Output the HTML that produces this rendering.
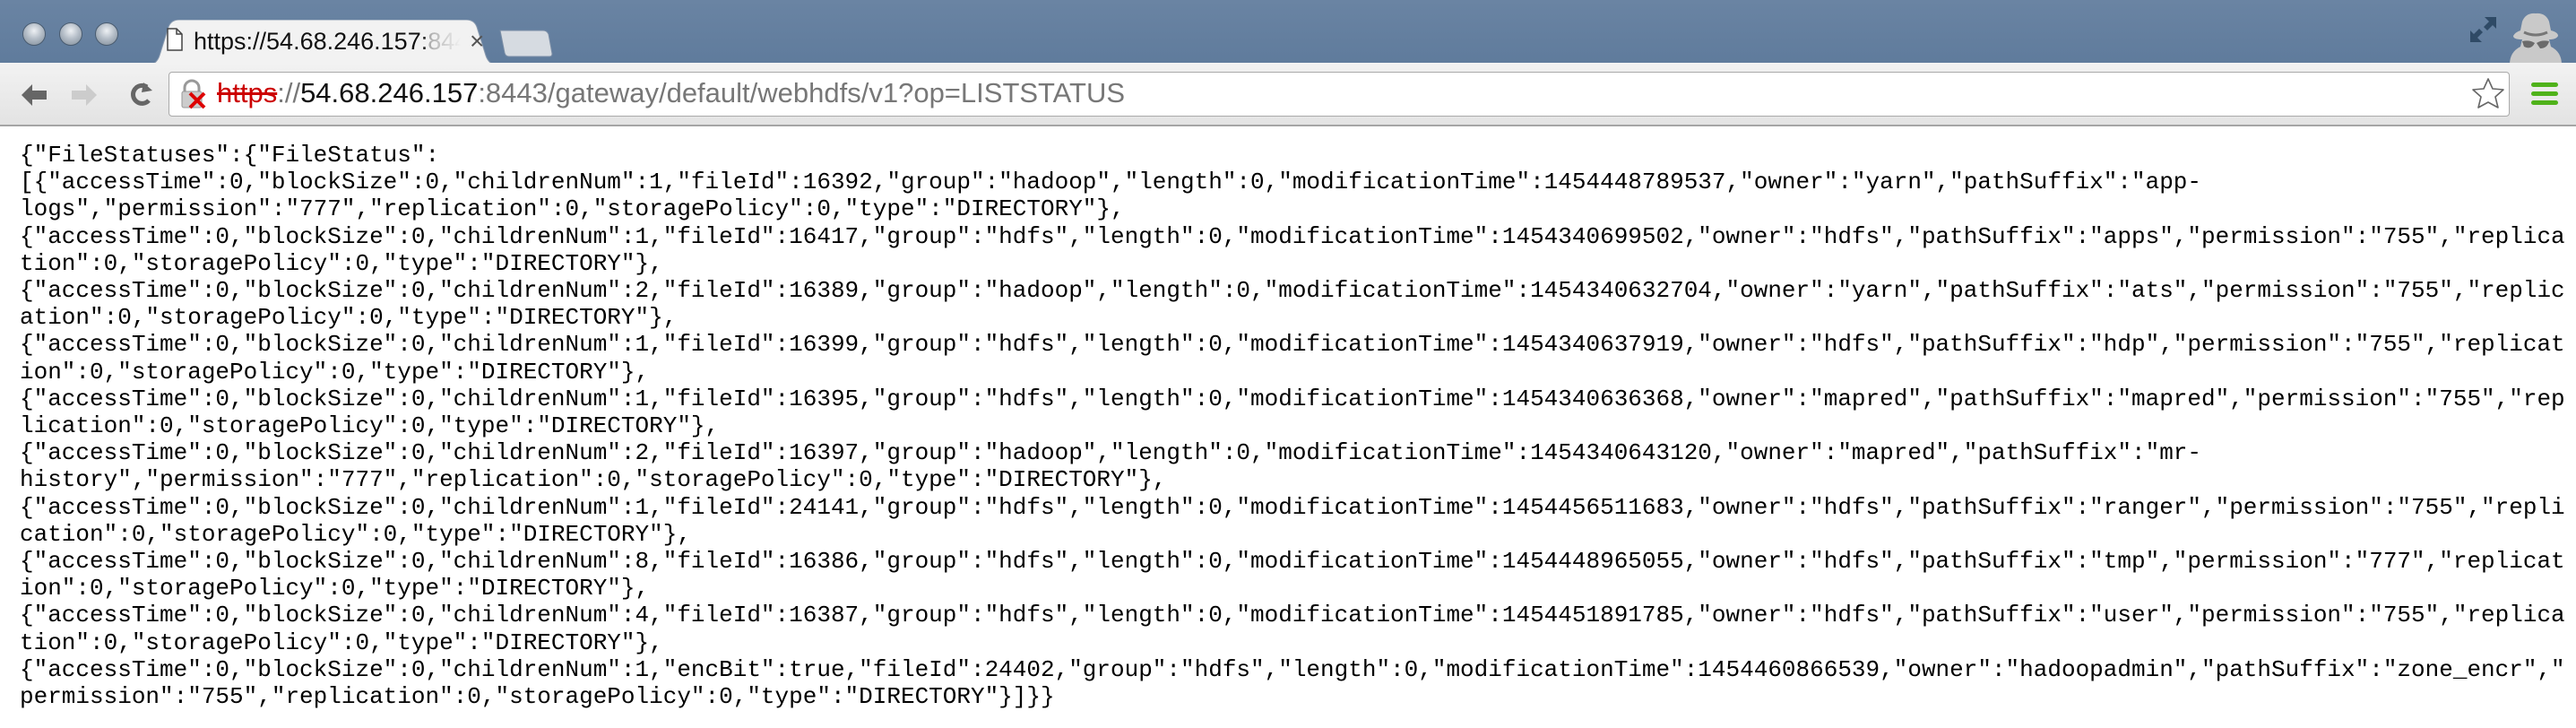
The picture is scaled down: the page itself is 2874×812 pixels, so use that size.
<!DOCTYPE html>
<html><head><meta charset="utf-8">
<style>
html,body{margin:0;padding:0;}
body{width:2874px;height:812px;overflow:hidden;background:#fff;position:relative;font-family:"Liberation Sans",sans-serif;}
.top{position:absolute;left:0;top:0;width:2874px;height:72px;background:linear-gradient(#6a84a3,#5f7b9c);}
.light{position:absolute;top:25px;width:24px;height:24px;border-radius:50%;background:radial-gradient(circle at 50% 35%,#eef1f4 0,#b5bec8 45%,#7d8a97 100%);border:1px solid #4a5c70;}
.tab{position:absolute;left:160px;top:22px;width:400px;height:52px;}
.newtab{position:absolute;left:556px;top:32px;width:62px;height:32px;}
.tabtxt{position:absolute;left:216px;top:31px;width:298px;overflow:hidden;font-size:27px;color:#111;white-space:nowrap;-webkit-mask-image:linear-gradient(90deg,#000 85%,transparent);}
.tabx{position:absolute;left:524px;top:30px;font-size:28px;color:#555;}
.toolbar{position:absolute;left:0;top:70px;width:2874px;height:69px;background:linear-gradient(#f2f2f2,#e3e3e3);border-bottom:2px solid #a5a5a5;}
.omni{position:absolute;left:188px;top:80px;width:2612px;height:50px;background:#fff;border:1px solid #aaa;border-radius:4px;box-sizing:border-box;}
.url{position:absolute;left:242px;top:86px;font-size:31px;white-space:nowrap;color:#777;}
.url .h{color:#c00;text-decoration:line-through;}
.url .d{color:#111;}
.content{position:absolute;left:22px;top:158px;font-family:"Liberation Mono",monospace;font-size:26px;line-height:30.2px;color:#000;white-space:pre;}
</style></head><body>
<div class="top"></div>
<div class="light" style="left:25px"></div>
<div class="light" style="left:66px"></div>
<div class="light" style="left:106px"></div>
<svg class="tab" viewBox="0 0 400 52"><path d="M0 52 Q14 52 18 40 L28 8 Q31 0 40 0 L360 0 Q369 0 372 8 L382 40 Q386 52 400 52 Z" fill="#f2f2f2" stroke="#8a9bb0" stroke-width="1"/></svg>
<svg class="newtab" viewBox="0 0 62 32"><path d="M2 2 L50 2 Q54 2 56 6 L60 28 Q60 31 57 31 L12 31 Q8 31 7 27 Z" fill="#d6dbe1" stroke="#7b8ea6" stroke-width="1"/></svg>
<svg style="position:absolute;left:186px;top:31px" width="18" height="26" viewBox="0 0 18 26"><path d="M1 1 H11 L17 7 V25 H1 Z M11 1 V7 H17" fill="#fff" stroke="#444" stroke-width="1.5"/></svg>
<div class="tabtxt">https://54.68.246.157:<span style="color:#999">8443</span></div>
<div class="tabx">×</div>
<svg style="position:absolute;left:2755px;top:18px" width="32" height="30" viewBox="0 0 32 30"><path d="M17 1 H30 V14 L26 10 L20 16 L16 12 L22 6 Z M14 29 H1 V16 L5 20 L11 14 L15 18 L9 24 Z" fill="#2f4a66"/></svg>
<svg style="position:absolute;left:2793px;top:12px" width="72" height="60" viewBox="0 0 70 60"><path d="M20 12 Q24 2 35 3 Q46 2 50 12 L52 22 Q60 24 60 28 Q58 32 50 32 L52 40 Q64 46 64 60 H6 Q6 46 18 40 L20 32 Q10 32 10 28 Q12 24 18 22 Z" fill="#c9c9c9"/><path d="M20 34 Q28 32 34 36 Q30 44 22 40 Z M36 36 Q42 32 50 34 Q48 42 40 42 Z" fill="#6b6b6b"/><path d="M22 24 Q35 30 48 24" fill="none" stroke="#777" stroke-width="3"/></svg>
<div class="toolbar"></div>
<svg style="position:absolute;left:20px;top:88px" width="160" height="36" viewBox="0 0 160 36"><path d="M4 18 L16 6 L16 13 L32 13 L32 23 L16 23 L16 30 Z" fill="#666"/><path d="M88 18 L76 6 L76 13 L60 13 L60 23 L76 23 L76 30 Z" fill="#ccc"/><path d="M144 9 A10 10 0 1 0 146 24" fill="none" stroke="#666" stroke-width="5"/><path d="M140 4 L150 13 L138 15 Z" fill="#666"/></svg>
<div class="omni"></div>
<svg style="position:absolute;left:200px;top:88px" width="34" height="36" viewBox="0 0 34 36"><path d="M6 14 V10 A8 8 0 0 1 22 10 V14" fill="none" stroke="#999" stroke-width="3"/><rect x="3" y="14" width="22" height="18" rx="2" fill="#ccc" stroke="#999"/><path d="M12 16 L28 32 M28 16 L12 32" stroke="#d00" stroke-width="4"/></svg>
<div class="url"><span class="h">https</span>://<span class="d">54.68.246.157</span>:8443/gateway/default/webhdfs/v1?op=LISTSTATUS</div>
<svg style="position:absolute;left:2757px;top:86px" width="38" height="36" viewBox="0 0 38 36"><path d="M19 2 L24 13 L36 14 L27 22 L30 34 L19 28 L8 34 L11 22 L2 14 L14 13 Z" fill="#fff" stroke="#666" stroke-width="1.6" stroke-linejoin="round"/></svg>
<div style="position:absolute;left:2824px;top:92px;width:30px;height:5px;background:#4fb21a;border-radius:3px"></div>
<div style="position:absolute;left:2824px;top:102px;width:30px;height:5px;background:#4fb21a;border-radius:3px"></div>
<div style="position:absolute;left:2824px;top:112px;width:30px;height:5px;background:#4fb21a;border-radius:3px"></div>
<div class="content">{"FileStatuses":{"FileStatus":
[{"accessTime":0,"blockSize":0,"childrenNum":1,"fileId":16392,"group":"hadoop","length":0,"modificationTime":1454448789537,"owner":"yarn","pathSuffix":"app-
logs","permission":"777","replication":0,"storagePolicy":0,"type":"DIRECTORY"},
{"accessTime":0,"blockSize":0,"childrenNum":1,"fileId":16417,"group":"hdfs","length":0,"modificationTime":1454340699502,"owner":"hdfs","pathSuffix":"apps","permission":"755","replica
tion":0,"storagePolicy":0,"type":"DIRECTORY"},
{"accessTime":0,"blockSize":0,"childrenNum":2,"fileId":16389,"group":"hadoop","length":0,"modificationTime":1454340632704,"owner":"yarn","pathSuffix":"ats","permission":"755","replic
ation":0,"storagePolicy":0,"type":"DIRECTORY"},
{"accessTime":0,"blockSize":0,"childrenNum":1,"fileId":16399,"group":"hdfs","length":0,"modificationTime":1454340637919,"owner":"hdfs","pathSuffix":"hdp","permission":"755","replicat
ion":0,"storagePolicy":0,"type":"DIRECTORY"},
{"accessTime":0,"blockSize":0,"childrenNum":1,"fileId":16395,"group":"hdfs","length":0,"modificationTime":1454340636368,"owner":"mapred","pathSuffix":"mapred","permission":"755","rep
lication":0,"storagePolicy":0,"type":"DIRECTORY"},
{"accessTime":0,"blockSize":0,"childrenNum":2,"fileId":16397,"group":"hadoop","length":0,"modificationTime":1454340643120,"owner":"mapred","pathSuffix":"mr-
history","permission":"777","replication":0,"storagePolicy":0,"type":"DIRECTORY"},
{"accessTime":0,"blockSize":0,"childrenNum":1,"fileId":24141,"group":"hdfs","length":0,"modificationTime":1454456511683,"owner":"hdfs","pathSuffix":"ranger","permission":"755","repli
cation":0,"storagePolicy":0,"type":"DIRECTORY"},
{"accessTime":0,"blockSize":0,"childrenNum":8,"fileId":16386,"group":"hdfs","length":0,"modificationTime":1454448965055,"owner":"hdfs","pathSuffix":"tmp","permission":"777","replicat
ion":0,"storagePolicy":0,"type":"DIRECTORY"},
{"accessTime":0,"blockSize":0,"childrenNum":4,"fileId":16387,"group":"hdfs","length":0,"modificationTime":1454451891785,"owner":"hdfs","pathSuffix":"user","permission":"755","replica
tion":0,"storagePolicy":0,"type":"DIRECTORY"},
{"accessTime":0,"blockSize":0,"childrenNum":1,"encBit":true,"fileId":24402,"group":"hdfs","length":0,"modificationTime":1454460866539,"owner":"hadoopadmin","pathSuffix":"zone_encr","
permission":"755","replication":0,"storagePolicy":0,"type":"DIRECTORY"}]}}</div>
</body></html>
